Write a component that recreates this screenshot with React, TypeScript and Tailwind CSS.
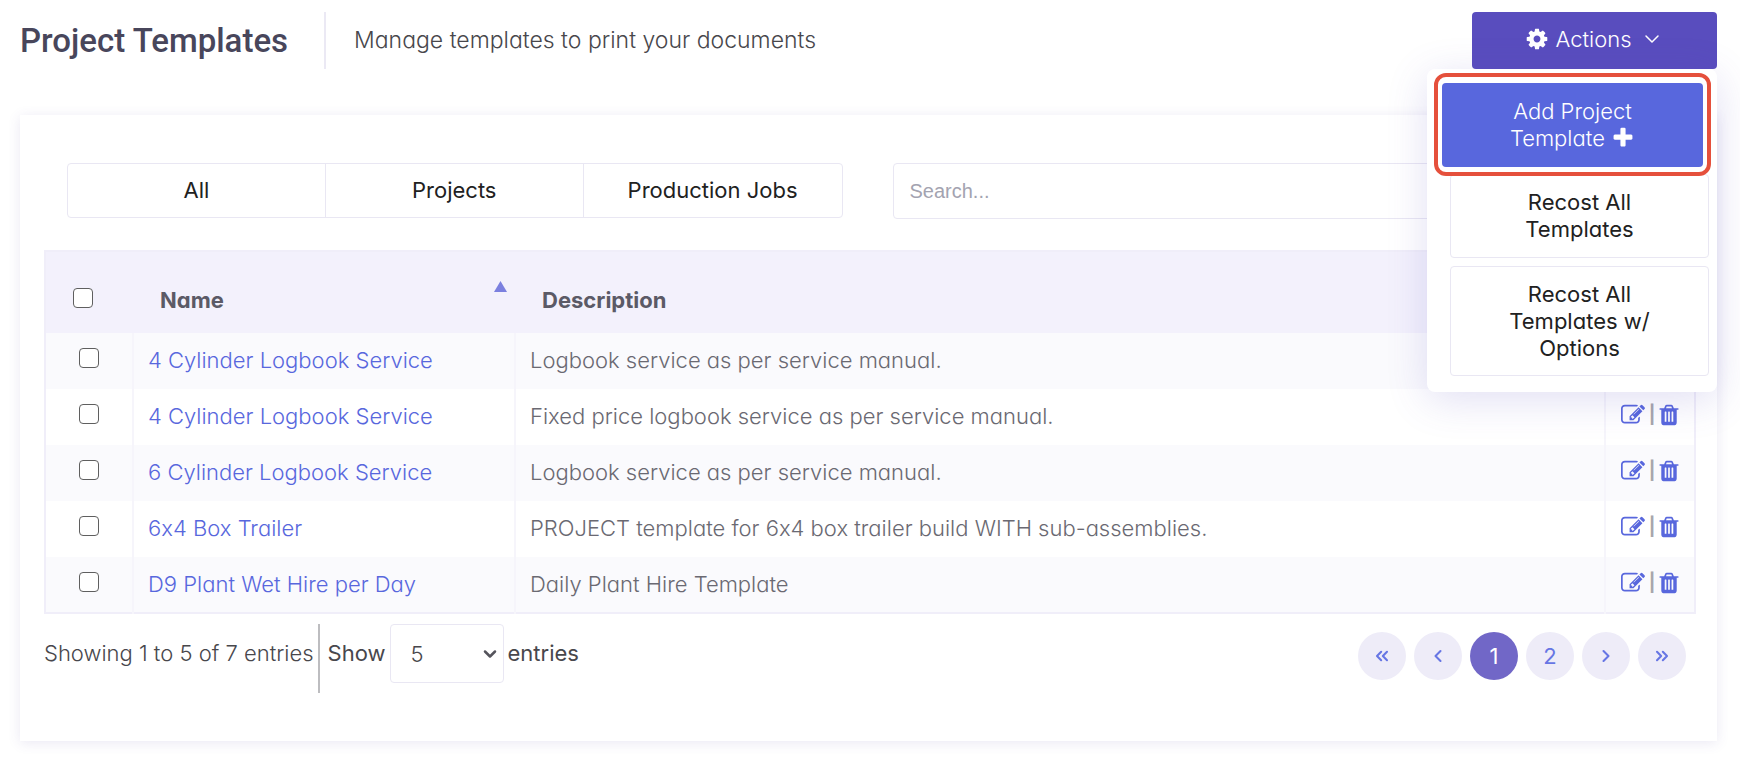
import React, { useState } from 'react';
import { ChevronDown, ChevronLeft, ChevronRight, ChevronsLeft, ChevronsRight } from 'lucide-react';

type IconProps = { path: string; className?: string };

// Font Awesome 4 glyphs, drawn on its 1792 grid
const COG =
  'M1152 896q0-106-75-181t-181-75-181 75-75 181 75 181 181 75 181-75 75-181zm512-109v222q0 12-8 23t-20 13l-185 28q-19 54-39 91 35 50 107 138 10 12 10 25t-9 23q-27 37-99 108t-94 71q-12 0-26-9l-138-108q-44 23-91 38-16 136-29 186-7 28-36 28h-222q-14 0-24.500-8.500t-11.500-21.500l-28-184q-49-16-90-37l-141 107q-10 9-25 9-14 0-25-11-126-114-165-168-7-10-7-23 0-12 8-23 15-21 51-66.500t54-70.500q-27-50-41-99l-183-27q-13-2-21-12.500t-8-23.500v-222q0-12 8-23t19-13l186-28q14-46 39-92-40-57-107-138-10-12-10-24 0-10 9-23 26-36 98.500-107.500t94.500-71.500q13 0 26 10l138 107q44-23 91-38 16-136 29-186 7-28 36-28h222q14 0 24.500 8.500t11.500 21.500l28 184q49 16 90 37l142-107q9-9 24-9 13 0 25 10 129 119 165 170 7 8 7 22 0 12-8 23-15 21-51 66.500t-54 70.500q26 50 41 98l183 28q13 2 21 12.500t8 23.500z';
const PLUS =
  'M1600 736v192q0 40-28 68t-68 28h-416v416q0 40-28 68t-68 28h-192q-40 0-68-28t-28-68v-416h-416q-40 0-68-28t-28-68v-192q0-40 28-68t68-28h416v-416q0-40 28-68t68-28h192q40 0 68 28t28 68v416h416q40 0 68 28t28 68z';
const EDIT =
  'M888 1184l116-116-152-152-116 116v56h96v96h56zm440-720q-16-16-33 1l-350 350q-17 17-1 33t33-1l350-350q17-17 1-33zm80 594v190q0 119-84.500 203.500t-203.500 84.500h-832q-119 0-203.500-84.500t-84.500-203.500v-832q0-119 84.500-203.500t203.500-84.500h832q63 0 117 25 15 7 18 23 3 17-9 29l-49 49q-14 14-32 8-23-6-45-6h-832q-66 0-113 47t-47 113v832q0 66 47 113t113 47h832q66 0 113-47t47-113v-126q0-13 9-22l64-64q15-15 35-7t20 29zm-96-738l288 288-672 672h-288v-288zm444 132l-92 92-288-288 92-92q28-28 68-28t68 28l152 152q28 28 28 68t-28 68z';
const TRASH =
  'M704 1376v-704q0-14-9-23t-23-9h-64q-14 0-23 9t-9 23v704q0 14 9 23t23 9h64q14 0 23-9t9-23zm256 0v-704q0-14-9-23t-23-9h-64q-14 0-23 9t-9 23v704q0 14 9 23t23 9h64q14 0 23-9t9-23zm256 0v-704q0-14-9-23t-23-9h-64q-14 0-23 9t-9 23v704q0 14 9 23t23 9h64q14 0 23-9t9-23zm-544-992h448l-48-117q-7-9-17-11h-317q-10 2-17 11zm928 32v64q0 14-9 23t-23 9h-96v948q0 83-47 143.500t-113 60.500h-832q-66 0-113-58.500t-47-141.500v-952h-96q-14 0-23-9t-9-23v-64q0-14 9-23t23-9h309l70-167q15-37 54-63t79-26h320q40 0 79 26t54 63l70 167h309q14 0 23 9t9 23z';

const Icon = ({ path, className }: IconProps) => (
  <svg viewBox="0 0 1792 1792" fill="currentColor" aria-hidden="true" className={className}>
    <path d={path} />
  </svg>
);

const templates = [
  { name: '4 Cylinder Logbook Service', description: 'Logbook service as per service manual.' },
  { name: '4 Cylinder Logbook Service', description: 'Fixed price logbook service as per service manual.' },
  { name: '6 Cylinder Logbook Service', description: 'Logbook service as per service manual.' },
  {
    name: '6x4 Box Trailer',
    description: 'PROJECT template for 6x4 box trailer build WITH sub-assemblies.',
  },
  { name: 'D9 Plant Wet Hire per Day', description: 'Daily Plant Hire Template' },
];

const checkboxStyle =
  'block size-5 appearance-none rounded border border-[#5f5f5f] bg-white checked:bg-[#5867dd]';
const pageStyle =
  'flex size-12 items-center justify-center rounded-full bg-[#eeecf8] text-[#6776e4]';
const menuItemStyle =
  'rounded border border-[#e9e7f3] bg-white px-10 text-[#212121]';

const ActionsMenu = () => {
  const [open, setOpen] = useState(true);

  return (
    <div className="relative w-[245px]">
      <button
        className="flex h-[57px] w-full items-center justify-center rounded bg-[#594dbe] pb-1 text-white"
        aria-expanded={open}
        onClick={() => setOpen(!open)}
      >
        <Icon path={COG} className="mr-1.5 size-6" />
        <span className="font-light">Actions</span>
        <ChevronDown className="ml-2 size-6" strokeWidth={1.500} />
      </button>
      {open && (
        <div className="absolute right-0 top-full z-10 flex w-[290px] flex-col rounded-lg bg-white pb-4 pl-[7px] pr-1.5 pt-1 text-center leading-[27px] shadow-[0_8px_40px_rgba(88,77,190,0.18)]">
          <div className="relative rounded-xl border-4 border-[#e5503c] bg-white px-1 pb-[5px] pt-1.5">
            <button className="h-[84px] w-full rounded bg-[#5867dd] px-12 font-light text-white">
              Add Project Template <Icon path={PLUS} className="inline size-6 align-[-4px]" />
            </button>
          </div>
          <div className="-mt-0.5 flex flex-col gap-2 pl-4 pr-0.5">
            <button className={`h-[84px] ${menuItemStyle}`}>Recost All Templates</button>
            <button className={`h-[110px] ${menuItemStyle}`}>Recost All Templates w/ Options</button>
          </div>
        </div>
      )}
    </div>
  );
};

const TemplateTable = () => (
  <table className="w-full table-fixed border-collapse border-2 border-[#f0eef9] text-left">
    <colgroup>
      <col className="w-[88px]" />
      <col className="w-[382px]" />
      <col />
      <col className="w-[90px]" />
    </colgroup>
    <thead>
      <tr className="h-[82px] bg-[#f3f1fc] text-[#5b5a66]">
        <th className="pl-[27px] pt-2.5">
          <input type="checkbox" aria-label="Select all" className={checkboxStyle} />
        </th>
        <th className="pl-[27px] pr-2 pt-3.5 font-bold">
          <div className="flex items-start justify-between">
            Name
            <svg viewBox="0 0 13 11" aria-hidden="true" className="-mt-1 h-[11px] w-[13px]">
              <path d="M6.500 0L13 11H0z" fill="#7b80df" />
            </svg>
          </div>
        </th>
        <th className="pl-[27px] pt-3.5 font-bold">Description</th>
        <th aria-label="Row actions" />
      </tr>
    </thead>
    <tbody>
      {templates.map((template, i) => (
        <tr key={i} className="h-14 odd:bg-[#fafafd]">
          <td className="border-r-2 border-[#f6f5fb] pb-1.5 pl-[33px]">
            <input type="checkbox" aria-label={`Select ${template.name}`} className={checkboxStyle} />
          </td>
          <td className="border-r-2 border-[#f6f5fb] pb-0.5 pl-3.5 font-light">
            <a href="#" className="text-[#5867dd]">
              {template.name}
            </a>
          </td>
          <td className="border-r-2 border-[#f6f5fb] pb-0.5 pl-3.5 font-light text-[#6a6972]">
            {template.description}
          </td>
          <td>
            <div className="flex items-center justify-center pb-1 pl-0.5 text-[#5867dd]">
              <button aria-label="Edit">
                <Icon path={EDIT} className="size-6" />
              </button>
              <span className="ml-1 mr-0.5 text-[18px] font-bold text-[#a7a6ab]">|</span>
              <button aria-label="Delete">
                <Icon path={TRASH} className="size-6" />
              </button>
            </div>
          </td>
        </tr>
      ))}
    </tbody>
  </table>
);

const Pagination = () => (
  <nav aria-label="Pages" className="flex gap-2 pr-2.5 pt-2">
    <button aria-label="First page" className={pageStyle}>
      <ChevronsLeft className="size-5" strokeWidth={2.500} />
    </button>
    <button aria-label="Previous page" className={pageStyle}>
      <ChevronLeft className="size-5" strokeWidth={2.500} />
    </button>
    <button
      aria-current="page"
      className="flex size-12 items-center justify-center rounded-full bg-[#7167c7] text-white"
    >
      1
    </button>
    <button className={pageStyle}>2</button>
    <button aria-label="Next page" className={pageStyle}>
      <ChevronRight className="size-5" strokeWidth={2.500} />
    </button>
    <button aria-label="Last page" className={pageStyle}>
      <ChevronsRight className="size-5" strokeWidth={2.500} />
    </button>
  </nav>
);

const App = () => {
  return (
    <div className="bg-white pb-[18px] pl-5 pr-[23px] pt-3 font-['Inter',sans-serif] text-[22px] leading-[30px] text-[#48474c] [font-feature-settings:'cv11','calt'_0]">
      <header className="flex items-start justify-between">
        <div className="flex h-[57px] items-center">
          <h1 className="pr-9 font-[Roboto,sans-serif] text-[33px] font-medium text-[#48465b]">
            Project Templates
          </h1>
          <p className="flex h-full items-center border-l-2 border-[#ebe9f4] pb-0.5 pl-7 text-[23px] font-light">
            Manage templates to print your documents
          </p>
        </div>
        <ActionsMenu />
      </header>

      <main className="mt-[46px] bg-white pb-12 pl-6 pr-[21px] pt-12 shadow-[0_2px_12px_rgba(82,63,155,0.12)]">
        <div className="mb-[31px] grid grid-cols-2 items-start gap-[50px] pl-[23px] pr-7">
          <div className="grid h-[55px] grid-cols-3 divide-x divide-[#e9e7f3] rounded border border-[#e9e7f3] text-[#212121]">
            <button className="pb-0.5">All</button>
            <button className="pb-0.5">Projects</button>
            <button className="pb-0.5">Production Jobs</button>
          </div>
          <input
            type="search"
            aria-label="Search"
            placeholder="Search..."
            className="h-14 w-full rounded border border-[#e9e7f3] px-4 font-['Liberation_Sans',sans-serif] text-[20px] placeholder:text-[#a3a3b0]"
          />
        </div>

        <TemplateTable />

        <div className="mt-2.5 flex items-start justify-between">
          <div className="flex items-start">
            <p className="h-[69px] border-r-2 border-[#bdbdc0] pr-1 pt-3.5 font-light">
              Showing 1 to 5 of 7 entries
            </p>
            <label className="flex items-start pl-2">
              <span className="pt-3.5">Show</span>
              <span className="relative mx-1">
                <select
                  defaultValue="5"
                  className="h-[59px] w-[114px] appearance-none rounded border border-[#e9e7f3] bg-white pl-5 font-light"
                >
                  <option>5</option>
                  <option>10</option>
                  <option>25</option>
                </select>
                <ChevronDown
                  className="pointer-events-none absolute right-1 top-5 size-5 text-[#55545c]"
                  strokeWidth={3}
                />
              </span>
              <span className="pt-3.5">entries</span>
            </label>
          </div>
          <Pagination />
        </div>
      </main>
    </div>
  );
};

export default App;
